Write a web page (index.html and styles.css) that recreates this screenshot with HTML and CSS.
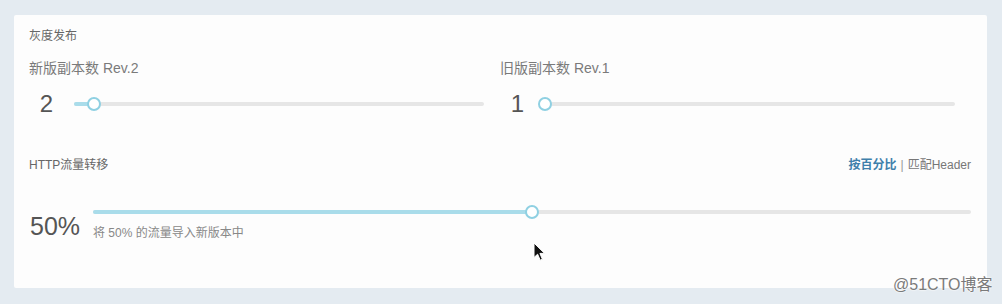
FILE: index.html
```html
<!DOCTYPE html>
<html lang="zh-CN">
<head>
<meta charset="utf-8">
<title>灰度发布</title>
<link rel="stylesheet" href="styles.css">
</head>
<body>
<div class="page">
  <section class="card">
    <div class="title">灰度发布</div>
    <div class="replicas">
      <div class="rep rep-new">
        <div class="rep-label">新版副本数 Rev.2</div>
        <div class="rep-row">
          <div class="rep-num">2</div>
          <div class="slider">
            <div class="track"><div class="fill" style="width:4.9%"></div></div>
            <div class="handle" style="left:4.9%"></div>
          </div>
        </div>
      </div>
      <div class="rep rep-old">
        <div class="rep-label">旧版副本数 Rev.1</div>
        <div class="rep-row">
          <div class="rep-num">1</div>
          <div class="slider">
            <div class="track"><div class="fill" style="width:1.45%"></div></div>
            <div class="handle" style="left:1.45%"></div>
          </div>
        </div>
      </div>
    </div>
    <div class="http-head">
      <div class="http-title">HTTP流量转移</div>
      <div class="modes"><a class="mode active">按百分比</a><span class="sep">|</span><a class="mode">匹配Header</a></div>
    </div>
    <div class="traffic">
      <div class="traffic-num">50%</div>
      <div class="traffic-main">
        <div class="slider">
          <div class="track"><div class="fill" style="width:50%"></div></div>
          <div class="handle" style="left:50%"></div>
        </div>
        <div class="hint">将 50% 的流量导入新版本中</div>
      </div>
    </div>
  </section>
  <svg class="cursor" width="13" height="20" viewBox="0 0 13 20">
    <path d="M1 1 L1 15.5 L4.6 12.2 L7.2 18.2 L9.4 17.2 L6.9 11.4 L11.6 11.4 Z" fill="#111" stroke="#fff" stroke-width="1" stroke-linejoin="round"/>
  </svg>
  <div class="watermark">@51CTO博客</div>
</div>
</body>
</html>
```

FILE: styles.css
```css
* { box-sizing: border-box; }
html, body { margin: 0; padding: 0; }
body {
  background: #e4ebf1;
  font-family: "Liberation Sans", "Noto Sans CJK SC", sans-serif;
  width: 1002px;
  height: 304px;
  overflow: hidden;
}
.page { position: relative; padding: 15px 15px 0 14px; height: 304px; }
.card {
  background: #fdfdfd;
  height: 273px;
  padding: 13px 16px 0 15px;
  border-radius: 2px;
}
.title { font-size: 12px; line-height: 16px; color: #666; }
.replicas { display: grid; grid-template-columns: 471px 471px; margin-top: 14px; }
.rep-label { font-size: 14px; line-height: 20px; color: #7a7a7a; }
.rep-row { display: flex; align-items: center; margin-top: 11px; height: 30px; }
.rep-num {
  width: 35px;
  text-align: center;
  font-size: 24px;
  line-height: 30px;
  color: #555;
}
.rep .slider { flex: 1; margin-right: 16px; }
.rep-new .slider { margin-left: 10px; }
.rep-old .slider { margin-left: 4px; }
.slider { position: relative; height: 14px; display: flex; align-items: center; }
.track {
  width: 100%;
  height: 4px;
  background: #e6e6e6;
  border-radius: 2px;
  overflow: hidden;
}
.fill { height: 100%; background: #a9dcea; }
.handle {
  position: absolute;
  top: 50%;
  width: 14px;
  height: 14px;
  border: 2px solid #8fd0e2;
  background: #fff;
  border-radius: 50%;
  transform: translate(-50%, -50%);
}
.http-head {
  display: flex;
  justify-content: space-between;
  align-items: center;
  margin-top: 38px;
  line-height: 16px;
}
.http-title { font-size: 12px; color: #666; }
.modes { font-size: 12px; color: #777; }
.mode { color: #777; }
.mode.active { color: #3f80ab; font-weight: bold; }
.sep { margin: 0 4px; color: #999; }
.traffic { display: flex; align-items: flex-start; margin-top: 32px; }
.traffic-num {
  width: 64px;
  padding-left: 1px;
  margin-top: 6px;
  font-size: 25px;
  line-height: 30px;
  color: #555;
}
.traffic-main { flex: 1; }
.hint { margin-top: 6px; font-size: 12px; line-height: 16px; color: #888; }
.cursor { position: absolute; left: 533px; top: 242px; }
.watermark {
  position: absolute;
  left: 893px;
  top: 275px;
  font-size: 16px;
  line-height: 20px;
  color: #7a7a7a;
  text-shadow: 0 0 2px #fff, 0 0 2px #fff;
}
```
